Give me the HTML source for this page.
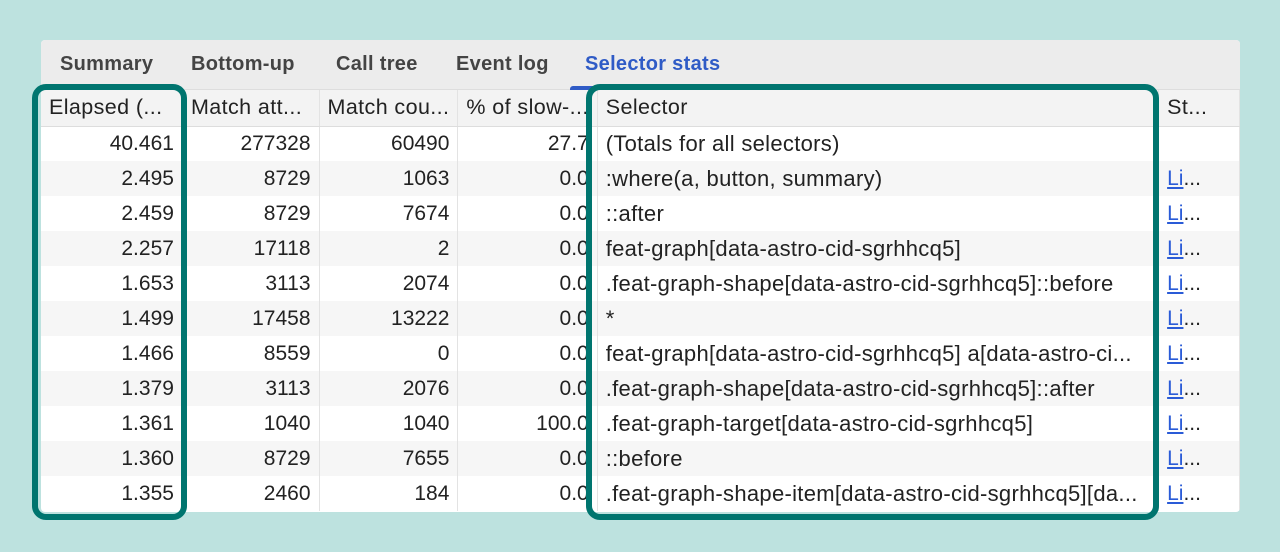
<!DOCTYPE html>
<html><head><style>
body{margin:0;width:1280px;height:552px;background:#bde2df;font-family:"Liberation Sans",sans-serif;position:relative;overflow:hidden}
.panel{position:absolute;left:41px;top:40px;width:1199px;height:472px;background:#fff;border-radius:4px;overflow:hidden}
.tabs{height:50px;background:#ececec;position:relative;border-bottom:1px solid #ddd;box-sizing:border-box}
.tab{position:absolute;top:13px;font-size:20px;color:#444;font-weight:bold;letter-spacing:0.3px}
.tab.sel{color:#2f5bc6}
.ul{position:absolute;left:529px;top:46px;width:172px;height:4px;background:#2f5bc6;border-radius:3px 3px 0 0}
table{border-collapse:collapse;position:absolute;top:50px;left:0;font-size:21px;color:#222;table-layout:fixed}
td{height:35px;padding:0 8px;white-space:nowrap;overflow:hidden;border-right:1px solid #e3e3e3;box-sizing:border-box}
td.t{font-size:22px;letter-spacing:0.3px}
tr.h td{height:36px;background:#f3f3f3;border-bottom:1px solid #ddd;font-size:21.5px;letter-spacing:0.4px}
tr:nth-child(odd):not(.h) td{background:#f6f6f6}
.r{text-align:right}
a{color:#2a5bd7;text-decoration:underline}
.box{position:absolute;border:6px solid #00756f;border-radius:14px;box-sizing:border-box}
</style></head><body>
<div class="panel">
<div class="tabs">
<span class="tab" style="left:19px">Summary</span>
<span class="tab" style="left:150px">Bottom-up</span>
<span class="tab" style="left:295px">Call tree</span>
<span class="tab" style="left:415px">Event log</span>
<span class="tab sel" style="left:544px">Selector stats</span>
<div class="ul"></div>
</div>
<table>
<colgroup><col style="width:142px"><col style="width:137px"><col style="width:138px"><col style="width:138px"><col style="width:562px"><col style="width:82px"></colgroup>
<tr class="h"><td>Elapsed (...</td><td>Match att...</td><td>Match cou...</td><td>% of slow-...</td><td>Selector</td><td>St...</td></tr>
<tr><td class="r">40.461</td><td class="r">277328</td><td class="r">60490</td><td class="r">27.7</td><td class="t">(Totals for all selectors)</td><td></td></tr>
<tr><td class="r">2.495</td><td class="r">8729</td><td class="r">1063</td><td class="r">0.0</td><td class="t">:where(a, button, summary)</td><td><a>Li</a>...</td></tr>
<tr><td class="r">2.459</td><td class="r">8729</td><td class="r">7674</td><td class="r">0.0</td><td class="t">::after</td><td><a>Li</a>...</td></tr>
<tr><td class="r">2.257</td><td class="r">17118</td><td class="r">2</td><td class="r">0.0</td><td class="t">feat-graph[data-astro-cid-sgrhhcq5]</td><td><a>Li</a>...</td></tr>
<tr><td class="r">1.653</td><td class="r">3113</td><td class="r">2074</td><td class="r">0.0</td><td class="t">.feat-graph-shape[data-astro-cid-sgrhhcq5]::before</td><td><a>Li</a>...</td></tr>
<tr><td class="r">1.499</td><td class="r">17458</td><td class="r">13222</td><td class="r">0.0</td><td class="t">*</td><td><a>Li</a>...</td></tr>
<tr><td class="r">1.466</td><td class="r">8559</td><td class="r">0</td><td class="r">0.0</td><td class="t">feat-graph[data-astro-cid-sgrhhcq5] a[data-astro-ci...</td><td><a>Li</a>...</td></tr>
<tr><td class="r">1.379</td><td class="r">3113</td><td class="r">2076</td><td class="r">0.0</td><td class="t">.feat-graph-shape[data-astro-cid-sgrhhcq5]::after</td><td><a>Li</a>...</td></tr>
<tr><td class="r">1.361</td><td class="r">1040</td><td class="r">1040</td><td class="r">100.0</td><td class="t">.feat-graph-target[data-astro-cid-sgrhhcq5]</td><td><a>Li</a>...</td></tr>
<tr><td class="r">1.360</td><td class="r">8729</td><td class="r">7655</td><td class="r">0.0</td><td class="t">::before</td><td><a>Li</a>...</td></tr>
<tr><td class="r">1.355</td><td class="r">2460</td><td class="r">184</td><td class="r">0.0</td><td class="t">.feat-graph-shape-item[data-astro-cid-sgrhhcq5][da...</td><td><a>Li</a>...</td></tr>
</table>
</div>
<div class="box" style="left:32px;top:84px;width:155px;height:436px"></div>
<div class="box" style="left:586px;top:84px;width:573px;height:436px"></div>
</body></html>
